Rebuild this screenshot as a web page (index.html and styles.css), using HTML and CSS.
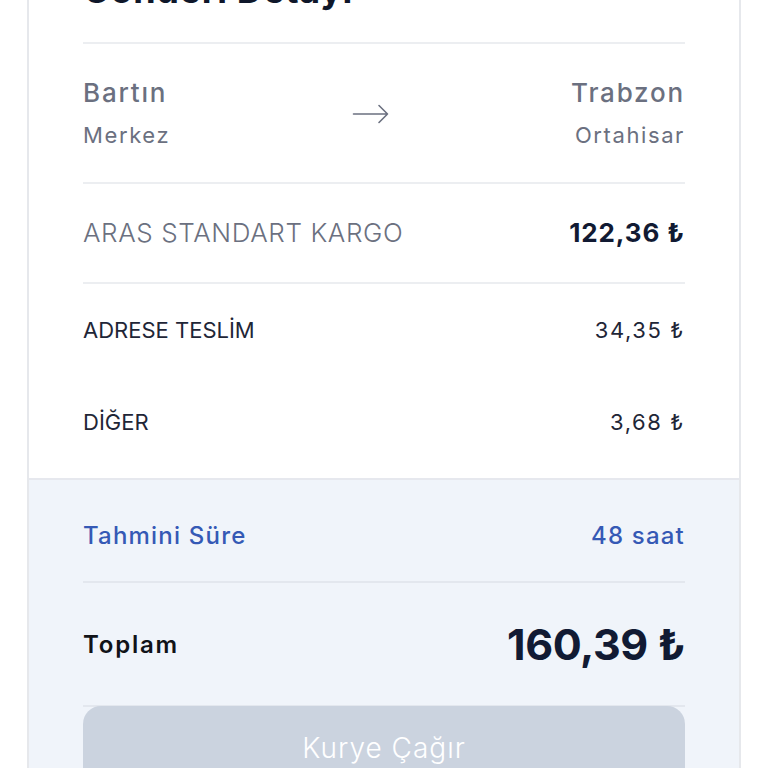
FILE: index.html
```html
<!DOCTYPE html>
<html lang="tr">
<head>
<meta charset="utf-8">
<title>Gönderi Detayı</title>
<link rel="stylesheet" href="styles.css">
</head>
<body>
<div class="card">
  <div class="top">
    <h1 class="title">Gönderi Detayı</h1>
    <div class="divider"></div>
    <div class="route">
      <div class="place">
        <div class="city">Bartın</div>
        <div class="district">Merkez</div>
      </div>
      <svg class="arrow" width="38" height="24" viewBox="0 0 38 24" aria-hidden="true">
        <path d="M1.5 12 H35.5 M27 3.5 L35.5 12 L27 20.5" fill="none" stroke="#6b7080" stroke-width="1.6" stroke-linecap="round" stroke-linejoin="round"/>
      </svg>
      <div class="place place-right">
        <div class="city">Trabzon</div>
        <div class="district">Ortahisar</div>
      </div>
    </div>
    <div class="divider"></div>
    <div class="row row-carrier">
      <span class="carrier">ARAS STANDART KARGO</span>
      <span class="carrier-price">122,36 ₺</span>
    </div>
    <div class="divider"></div>
    <div class="row row-fee">
      <span class="fee">ADRESE TESLİM</span>
      <span class="fee-price">34,35 ₺</span>
    </div>
    <div class="row row-fee">
      <span class="fee">DİĞER</span>
      <span class="fee-price">3,68 ₺</span>
    </div>
  </div>
  <div class="bottom">
    <div class="row row-time">
      <span class="time">Tahmini Süre</span>
      <span class="time">48 saat</span>
    </div>
    <div class="divider divider-soft"></div>
    <div class="row row-total">
      <span class="total-label">Toplam</span>
      <span class="total-price">160,39 ₺</span>
    </div>
    <div class="divider divider-soft"></div>
    <button class="cta" type="button">Kurye Çağır</button>
  </div>
</div>
</body>
</html>
```
FILE: styles.css
```css
html, body {
  margin: 0;
  padding: 0;
  background: #ffffff;
}

body {
  font-family: Inter, "Noto Sans", "DejaVu Sans", sans-serif;
  overflow: hidden;
  height: 768px;
}

.card {
  margin: -34px 27px 0;
  border: 2px solid #e6e8ec;
  border-bottom: none;
  background: #ffffff;
}

.top {
  padding: 0 54px 10px;
  border-bottom: 2px solid #e6e8ee;
}

.title {
  margin: 0 0 30px;
  font-size: 36px;
  line-height: 44px;
  font-weight: 700;
  letter-spacing: 0.6px;
  color: #0f172a;
}

.divider {
  height: 2px;
  background: #eceef1;
}

.divider-soft {
  background: #e3e7ee;
}

.route {
  display: flex;
  align-items: center;
  justify-content: space-between;
  height: 138px;
  padding-top: 2px;
  box-sizing: border-box;
}

.place {
  display: flex;
  flex-direction: column;
  gap: 10px;
}

.place-right {
  align-items: flex-end;
}

.city {
  font-size: 26px;
  line-height: 32px;
  font-weight: 500;
  letter-spacing: 1.8px;
  color: #6b7080;
}

.district {
  font-size: 22px;
  line-height: 32px;
  font-weight: 400;
  letter-spacing: 1.6px;
  color: #6b7080;
}

.arrow {
  display: block;
}

.row {
  display: flex;
  align-items: center;
  justify-content: space-between;
}

.row-carrier {
  height: 98px;
  padding-bottom: 2px;
  box-sizing: border-box;
}

.carrier {
  font-size: 26px;
  font-weight: 300;
  letter-spacing: 0.6px;
  color: #6b7080;
}

.carrier-price {
  font-size: 26px;
  font-weight: 700;
  letter-spacing: 0.9px;
  color: #111a33;
}

.row-fee {
  height: 92px;
}

.fee, .fee-price {
  font-size: 22px;
  font-weight: 400;
  color: #1f2637;
}

.fee-price {
  letter-spacing: 1.6px;
}

.bottom {
  background: #f0f4fa;
  padding: 10px 54px 0;
}

.row-time {
  height: 91px;
}

.time {
  font-size: 24px;
  font-weight: 500;
  letter-spacing: 1.2px;
  color: #3559b5;
}

.row-total {
  height: 122px;
}

.total-label {
  font-size: 24px;
  font-weight: 600;
  letter-spacing: 1.8px;
  color: #111318;
}

.total-price {
  font-size: 43px;
  font-weight: 700;
  letter-spacing: -0.4px;
  color: #111a33;
}

.cta {
  display: block;
  width: 100%;
  height: 84px;
  margin-top: -1px;
  border: none;
  border-radius: 18px;
  background: #cbd3df;
  color: #ffffff;
  font-family: inherit;
  font-size: 28px;
  font-weight: 300;
  letter-spacing: 1px;
}
```
